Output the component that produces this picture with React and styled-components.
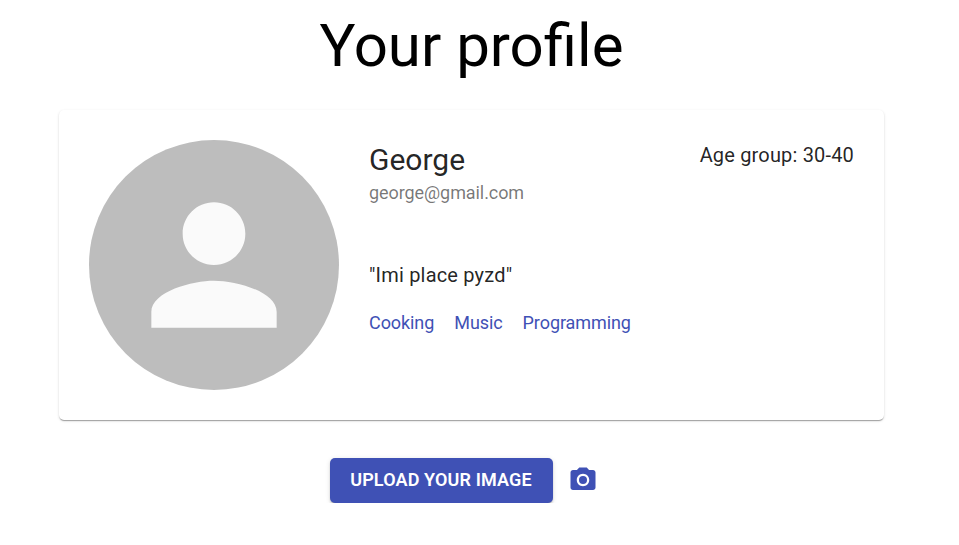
import React from "react";
import styled, { createGlobalStyle } from "styled-components";

const GlobalStyle = createGlobalStyle`
  *, *::before, *::after { box-sizing: border-box; }
  body {
    margin: 0;
    background: #fff;
    font-family: Roboto, "Liberation Sans", sans-serif;
    overflow: hidden;
  }
`;

const Page = styled.main`
  width: 943px;
  display: flex;
  flex-direction: column;
  align-items: center;
`;

const Title = styled.h1`
  margin: 11px 0 29px;
  font-size: 60px;
  line-height: 70px;
  font-weight: 400;
  color: #000;
`;

const Card = styled.section`
  display: flex;
  width: 825px;
  height: 310px;
  padding: 30px;
  gap: 30px;
  background: #fff;
  border-radius: 5px;
  box-shadow: 0 2px 1px -1px rgba(0, 0, 0, 0.2), 0 1px 1px 0 rgba(0, 0, 0, 0.14),
    0 1px 3px 0 rgba(0, 0, 0, 0.12);
`;

const Avatar = styled.div`
  width: 250px;
  height: 250px;
  flex: none;
  display: flex;
  align-items: center;
  justify-content: center;
  border-radius: 50%;
  background: #bdbdbd;
  color: #fafafa;
`;

const Details = styled.div`
  flex: 1;
  display: flex;
  flex-direction: column;
`;

const Name = styled.h2`
  margin: 0;
  font-size: 30px;
  line-height: 40px;
  font-weight: 400;
  color: rgba(0, 0, 0, 0.87);
`;

const Email = styled.p`
  margin: 0 0 57px;
  font-size: 18px;
  line-height: 26px;
  letter-spacing: -0.08px;
  color: rgba(0, 0, 0, 0.54);
`;

const Bio = styled.p`
  margin: 0;
  font-size: 20px;
  line-height: 24px;
  letter-spacing: 0.19px;
  color: rgba(0, 0, 0, 0.87);
`;

const Tags = styled.div`
  display: flex;
  gap: 20px;
  margin-top: 23px;
`;

const Tag = styled.span`
  font-size: 18px;
  line-height: 26px;
  letter-spacing: -0.08px;
  color: #3f51b5;
`;

const AgeGroup = styled.p`
  margin: 0;
  font-size: 20px;
  line-height: 30px;
  letter-spacing: 0.17px;
  color: rgba(0, 0, 0, 0.87);
`;

const Actions = styled.div`
  display: flex;
  align-items: center;
  gap: 15px;
  margin-top: 38px;
  padding-right: 16px;
`;

const UploadButton = styled.button`
  width: 223px;
  height: 45px;
  padding: 0 0 2px;
  border: 0;
  border-radius: 5px;
  background: #3f51b5;
  color: #fff;
  font-family: inherit;
  font-size: 18px;
  font-weight: 600;
  line-height: 30px;
  letter-spacing: 0.13px;
  text-transform: uppercase;
  white-space: nowrap;
  box-shadow: 0 3px 1px -2px rgba(0, 0, 0, 0.2), 0 2px 2px 0 rgba(0, 0, 0, 0.14),
    0 1px 5px 0 rgba(0, 0, 0, 0.12);
`;

const IconButton = styled.button`
  display: flex;
  padding: 0 0 2px;
  border: 0;
  background: none;
  color: #3f51b5;
`;

const Icon = styled.svg`
  width: ${({ $size }) => $size}px;
  height: ${({ $size }) => $size}px;
  fill: currentColor;
`;

const interests = ["Cooking", "Music", "Programming"];

export default function App() {
  return (
    <>
      <GlobalStyle />
      <Page>
        <Title>Your profile</Title>
        <Card>
          <Avatar>
            <Icon $size={188} viewBox="0 0 24 24" aria-hidden="true">
              <path d="M12 12c2.21 0 4-1.79 4-4s-1.79-4-4-4-4 1.79-4 4 1.79 4 4 4zm0 2c-2.67 0-8 1.34-8 4v2h16v-2c0-2.66-5.33-4-8-4z" />
            </Icon>
          </Avatar>
          <Details>
            <Name>George</Name>
            <Email>george@gmail.com</Email>
            <Bio>"Imi place pyzd"</Bio>
            <Tags>
              {interests.map((interest) => (
                <Tag key={interest}>{interest}</Tag>
              ))}
            </Tags>
          </Details>
          <AgeGroup>Age group: 30-40</AgeGroup>
        </Card>
        <Actions>
          <UploadButton type="button">Upload your image</UploadButton>
          <IconButton type="button" aria-label="Take a photo">
            <Icon $size={30} viewBox="0 0 24 24" aria-hidden="true">
              <path d="M9 2L7.17 4H4c-1.1 0-2 .9-2 2v12c0 1.1.9 2 2 2h16c1.1 0 2-.9 2-2V6c0-1.1-.9-2-2-2h-3.17L15 2H9zm3 15c-2.76 0-5-2.24-5-5s2.24-5 5-5 5 2.24 5 5-2.24 5-5 5z" />
              <circle cx="12" cy="12" r="3.2" />
            </Icon>
          </IconButton>
        </Actions>
      </Page>
    </>
  );
}
